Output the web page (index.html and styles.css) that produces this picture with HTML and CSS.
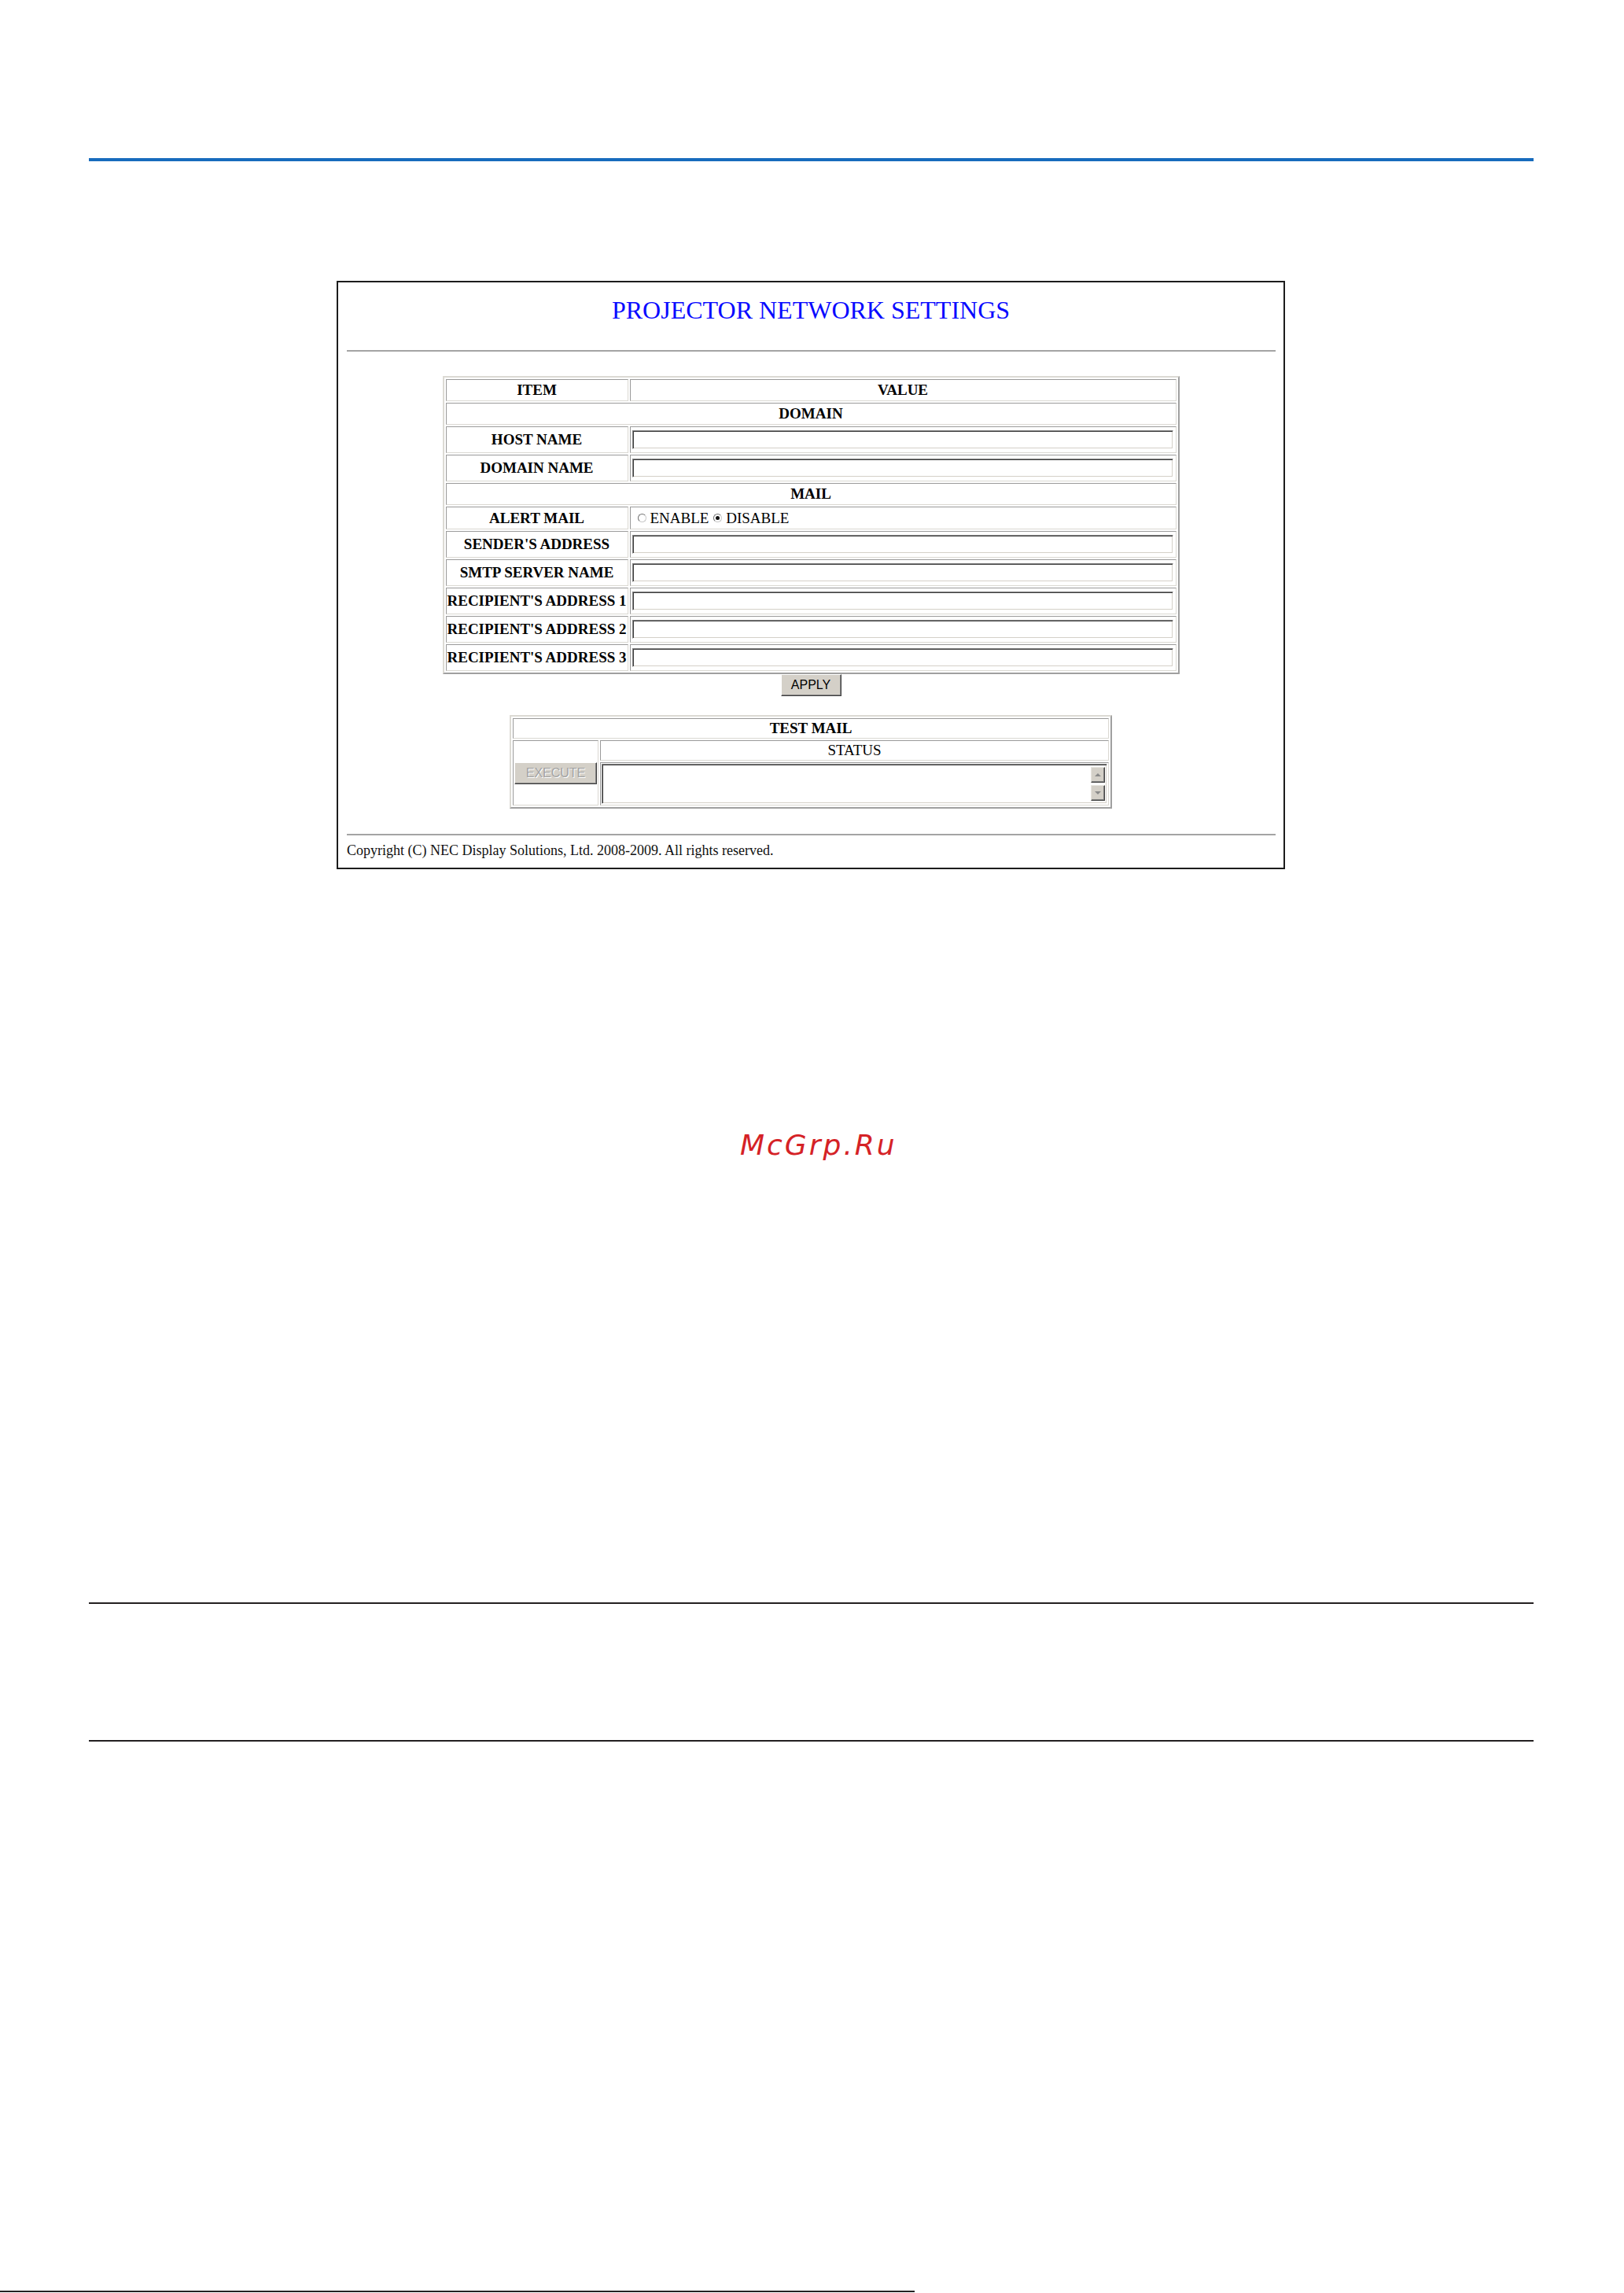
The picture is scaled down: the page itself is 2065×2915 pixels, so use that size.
FILE: index.html
```html
<!DOCTYPE html>
<html lang="en">
<head>
    <meta charset="UTF-8">
    <title>Projector Network Settings</title>
    <link rel="stylesheet" href="styles.css">
</head>
<body>
    <div class="page">
        <div class="rule-blue"></div>

        <div class="screen">
            <h1 class="title">PROJECTOR NETWORK SETTINGS</h1>
            <div class="line"></div>

            <table class="grid settings">
                <colgroup>
                    <col class="col-item">
                    <col>
                </colgroup>
                <tr class="row-text">
                    <th>ITEM</th>
                    <th>VALUE</th>
                </tr>
                <tr class="row-text">
                    <th colspan="2">DOMAIN</th>
                </tr>
                <tr class="row-input">
                    <th>HOST NAME</th>
                    <td class="field"><input type="text"></td>
                </tr>
                <tr class="row-input">
                    <th>DOMAIN NAME</th>
                    <td class="field"><input type="text"></td>
                </tr>
                <tr class="row-text">
                    <th colspan="2">MAIL</th>
                </tr>
                <tr class="row-radio">
                    <th>ALERT MAIL</th>
                    <td class="radios">
                        <label><input type="radio" name="alert">ENABLE</label>
                        <label><input type="radio" name="alert" checked>DISABLE</label>
                    </td>
                </tr>
                <tr class="row-input">
                    <th>SENDER'S ADDRESS</th>
                    <td class="field"><input type="text"></td>
                </tr>
                <tr class="row-input">
                    <th>SMTP SERVER NAME</th>
                    <td class="field"><input type="text"></td>
                </tr>
                <tr class="row-input">
                    <th>RECIPIENT'S ADDRESS 1</th>
                    <td class="field"><input type="text"></td>
                </tr>
                <tr class="row-input">
                    <th>RECIPIENT'S ADDRESS 2</th>
                    <td class="field"><input type="text"></td>
                </tr>
                <tr class="row-input">
                    <th>RECIPIENT'S ADDRESS 3</th>
                    <td class="field"><input type="text"></td>
                </tr>
            </table>

            <div class="apply-row">
                <button class="btn apply">APPLY</button>
            </div>

            <table class="grid testmail">
                <colgroup>
                    <col class="col-exec">
                    <col>
                </colgroup>
                <tr class="row-head">
                    <th colspan="2">TEST MAIL</th>
                </tr>
                <tr class="row-head">
                    <td class="exec-cell" rowspan="2"><button class="btn execute" disabled>EXECUTE</button></td>
                    <td class="status">STATUS</td>
                </tr>
                <tr class="row-area">
                    <td class="area-cell">
                        <div class="area">
                            <div class="scroll">
                                <div class="sbtn up"></div>
                                <div class="sbtn down"></div>
                            </div>
                        </div>
                    </td>
                </tr>
            </table>

            <div class="line bottom"></div>
            <p class="copy">Copyright (C) NEC Display Solutions, Ltd. 2008-2009. All rights reserved.</p>
        </div>

        <div class="mark">McGrp.Ru</div>

        <div class="rule-dark first"></div>
        <div class="rule-dark second"></div>

        <div class="edge"></div>
    </div>
</body>
</html>
```

FILE: styles.css
```css
*{
    box-sizing:border-box;
}
body{
    margin:0;
    background:#fff;
    font-family:"Liberation Serif", "Times New Roman", serif;
}
.page{
    padding-top:201px;
    width:2065px;
}
.rule-blue{
    margin-left:113px;
    width:1837px;
    height:4px;
    background:#176bbd;
}
.screen{
    margin:152px 0 0 428px;
    width:1206px;
    border:2px solid #1c1c1c;
    padding:17px 0 12px;
}
.title{
    margin:0;
    font-size:32px;
    line-height:36px;
    font-weight:normal;
    text-align:center;
    color:#0a0aff;
}
.line{
    margin:33px 10px 0 11px;
    border-top:2px solid #a4a4a4;
}
.line.bottom{
    margin-top:32px;
}
.copy{
    margin:9px 0 0 11px;
    font-size:18px;
    line-height:20px;
    color:#111;
}

/* tables */
.grid{
    margin:0 auto;
    border-collapse:separate;
    border-spacing:2px;
    border:2px solid;
    border-color:#dcdad4 #a0a0a0 #a0a0a0 #dcdad4;
    table-layout:fixed;
    font-size:19px;
    color:#000;
}
.grid th,
.grid td{
    border:1px solid;
    border-color:#9a9a9a #dad8d2 #dad8d2 #9a9a9a;
    padding:0 1px;
    text-align:center;
    vertical-align:middle;
    white-space:nowrap;
}
.grid th{
    font-weight:bold;
}
.settings{
    margin-top:31px;
    width:937px;
}
.col-item{
    width:232px;
}
.row-text{ height:28px; }
.row-input{ height:34px; }
.row-radio{ height:29px; }
.row-head{ height:26px; }
.row-area{ height:55px; }

.grid td.field{
    padding:2px 3px 2px 2px;
}
.field input{
    display:block;
    width:100%;
    height:24px;
    margin:0;
    padding:0 3px;
    -webkit-appearance:none;
    appearance:none;
    border:1px solid;
    border-color:#808080 #fff #fff #808080;
    box-shadow:inset 1px 1px #404040, inset -1px -1px #d4d0c8;
    background:#fff;
    font:16px "Liberation Sans", Arial, sans-serif;
}
.grid td.radios{
    text-align:left;
    padding-left:9px;
    font-weight:normal;
}
.radios label{
    margin-right:1px;
}
.radios input{
    -webkit-appearance:none;
    appearance:none;
    width:11px;
    height:11px;
    margin:0 5px 0 0;
    border:1px solid;
    border-color:#6e6e6e #c8c8c8 #c8c8c8 #6e6e6e;
    border-radius:50%;
    background:#fff;
    vertical-align:1px;
    position:relative;
}
.radios input:checked::after{
    content:"";
    position:absolute;
    left:2px;
    top:2px;
    width:5px;
    height:5px;
    border-radius:50%;
    background:#111;
}

/* buttons */
.btn{
    margin:0;
    padding:0;
    height:28px;
    background:#d4d0c8;
    border:1px solid;
    border-color:#fff #404040 #404040 #fff;
    box-shadow:inset -1px -1px #808080;
    font:16px "Liberation Sans", Arial, sans-serif;
    color:#000;
}
.apply-row{
    height:28px;
    text-align:center;
    font-size:0;
}
.apply{
    width:77px;
}
.execute{
    width:105px;
    color:#a3a3a3;
    text-shadow:1px 1px #fff;
}

/* test mail */
.testmail{
    margin-top:24px;
    width:766px;
}
.col-exec{
    width:109px;
}
.testmail .exec-cell{
    padding:1px;
}
.testmail .status{
    font-weight:normal;
}
.grid td.area-cell{
    padding:1px;
}
.area{
    height:51px;
    display:flex;
    justify-content:flex-end;
    border:1px solid;
    border-color:#808080 #fff #fff #808080;
    box-shadow:inset 1px 1px #404040, inset -1px -1px #d4d0c8;
    padding:3px 2px 2px 0;
    background:#fff;
}
.scroll{
    width:18px;
    display:flex;
    flex-direction:column;
    gap:3px;
}
.sbtn{
    height:20px;
    background:#d4d0c8;
    border:1px solid;
    border-color:#e8e6e0 #404040 #404040 #e8e6e0;
    box-shadow:inset -1px -1px #808080;
    display:flex;
    align-items:center;
    justify-content:center;
}
.sbtn::before{
    content:"";
    width:0;
    height:0;
    border-left:4px solid transparent;
    border-right:4px solid transparent;
}
.sbtn.up::before{
    border-bottom:4px solid #8a8a8a;
}
.sbtn.down::before{
    border-top:4px solid #8a8a8a;
}

/* below the screenshot */
.mark{
    margin:330px 0 0 941px;
    font-family:"DejaVu Sans", Verdana, sans-serif;
    font-style:oblique;
    font-size:36px;
    letter-spacing:3px;
    color:#d52226;
}
.rule-dark{
    margin-left:113px;
    width:1837px;
    height:2px;
    background:#231f20;
}
.rule-dark.first{
    margin-top:561px;
}
.rule-dark.second{
    margin-top:173px;
}
.edge{
    margin-top:698px;
    width:1163px;
    height:2px;
    background:#222;
}
```
